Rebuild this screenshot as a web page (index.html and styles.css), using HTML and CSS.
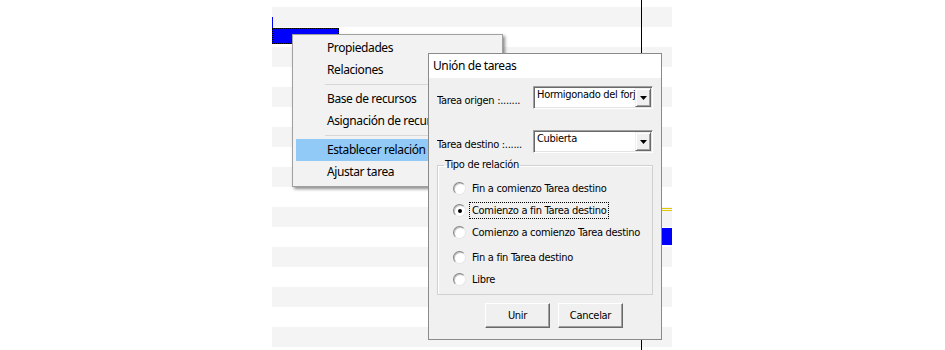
FILE: index.html
```html
<!DOCTYPE html>
<html lang="es">
<head>
  <meta charset="UTF-8">
  <title>Unión de tareas</title>
  <link rel="stylesheet" href="styles.css">
</head>
<body>
  <div class="chart">
    <div class="today-line"></div>
    <div class="task-tick"></div>
    <div class="task-bar"></div>
    <div class="link-line"></div>
    <div class="link-vline"></div>
    <div class="task-bar task-bar-right"></div>

    <div class="menu">
      <div class="menu-item">Propiedades</div>
      <div class="menu-item">Relaciones</div>
      <div class="menu-sep"></div>
      <div class="menu-item">Base de recursos</div>
      <div class="menu-item">Asignación de recursos</div>
      <div class="menu-sep"></div>
      <div class="menu-item active">Establecer relación</div>
      <div class="menu-item">Ajustar tarea</div>
    </div>

    <div class="dialog">
      <div class="dialog-title">Unión de tareas</div>
      <div class="dialog-body">
        <div class="field">
          <span class="field-label">Tarea origen :.......</span>
          <div class="combo">
            <span class="combo-text">Hormigonado del forj</span>
            <span class="combo-btn"><svg width="7" height="4" viewBox="0 0 7 4"><path d="M0 0h7L3.5 4z" fill="#000"/></svg></span>
          </div>
        </div>
        <div class="field field-second">
          <span class="field-label">Tarea destino :......</span>
          <div class="combo">
            <span class="combo-text">Cubierta</span>
            <span class="combo-btn"><svg width="7" height="4" viewBox="0 0 7 4"><path d="M0 0h7L3.5 4z" fill="#000"/></svg></span>
          </div>
        </div>

        <fieldset class="group">
          <legend>Tipo de relación</legend>
          <div class="radios">
            <div class="radio"><span class="radio-dot"></span><span class="radio-text">Fin a comienzo Tarea destino</span></div>
            <div class="radio"><span class="radio-dot checked"></span><span class="radio-text focused">Comienzo a fin Tarea destino</span></div>
            <div class="radio"><span class="radio-dot"></span><span class="radio-text">Comienzo a comienzo Tarea destino</span></div>
            <div class="radio radio-spaced"><span class="radio-dot"></span><span class="radio-text">Fin a fin Tarea destino</span></div>
            <div class="radio"><span class="radio-dot"></span><span class="radio-text">Libre</span></div>
          </div>
        </fieldset>

        <div class="buttons">
          <button class="btn">Unir</button>
          <button class="btn">Cancelar</button>
        </div>
      </div>
    </div>
  </div>
</body>
</html>
```

FILE: styles.css
```css
body {
  margin: 0;
  background: #fff;
  font-family: 'Liberation Sans', Arial, sans-serif;
}

/* gantt canvas */
.chart {
  position: relative;
  margin-left: 272px;
  width: 400px;
  height: 350px;
  overflow: hidden;
  background: repeating-linear-gradient(#f4f4f4 0 20px, #fff 20px 40px);
  background-position: 0 7px;
}

.today-line {
  position: absolute;
  left: 369px;
  top: 0;
  width: 1px;
  height: 350px;
  background: #000;
}

.task-tick {
  position: absolute;
  left: 0;
  top: 17px;
  width: 1px;
  height: 11px;
  background: #0000ff;
}

.task-bar {
  position: absolute;
  left: 0;
  top: 28px;
  width: 67px;
  height: 16px;
  background: #0000ff;
  outline: 1px dotted #000;
  outline-offset: -1px;
}

.task-bar-right {
  left: 388px;
  top: 228px;
  width: 12px;
  height: 17px;
  outline: none;
}

.link-line {
  position: absolute;
  left: 388px;
  top: 208px;
  width: 12px;
  height: 1px;
  border-top: 1px solid #e2c800;
  border-bottom: 1px solid #e2c800;
}

.link-vline {
  position: absolute;
  left: 389px;
  top: 77px;
  width: 1px;
  height: 223px;
  background: #1c1c78;
}

/* context menu */
.menu {
  position: absolute;
  left: 20px;
  top: 34px;
  width: 209px;
  padding: 2px 0 3px;
  background: #f2f2f2;
  border: 1px solid #a0a0a0;
  box-shadow: 2px 2px 3px rgba(0,0,0,0.45);
  font-family: 'Noto Sans', sans-serif;
  font-size: 12px;
  letter-spacing: -0.4px;
  color: #000;
}

.menu-item {
  margin: 0 3px;
  height: 22px;
  line-height: 22px;
  padding-left: 31px;
  white-space: nowrap;
  overflow: hidden;
}

.menu-item.active {
  background: #91c9f7;
}

.menu-sep {
  height: 1px;
  background: #d7d7d7;
  margin: 3px 3px 3px 32px;
}

.menu-sep + .menu-item {
  margin-top: 1px;
}

/* dialog */
.dialog {
  position: absolute;
  left: 156px;
  top: 53px;
  width: 232px;
  border: 1px solid #8a8a8a;
  background: #f0f0f0;
  font-family: 'DejaVu Sans Condensed', 'Liberation Sans', sans-serif;
  font-size: 11px;
  letter-spacing: -0.3px;
  color: #000;
}

.dialog-title {
  height: 24px;
  line-height: 24px;
  padding-left: 4px;
  background: #fff;
  font-family: 'Noto Sans', sans-serif;
  font-size: 12px;
  letter-spacing: -0.4px;
}

.dialog-body {
  padding: 8px 8px 11px;
}

.field {
  display: flex;
  align-items: flex-start;
}

.field-second {
  margin-top: 21px;
}

.field-label {
  flex: none;
  width: 96px;
  margin-top: 8px;
  line-height: 14px;
  white-space: nowrap;
  overflow: hidden;
}

.combo {
  flex: 1;
  min-width: 0;
  display: flex;
  height: 19px;
  background: #fff;
  border: 1px solid;
  border-color: #a0a0a0 #fff #fff #a0a0a0;
  box-shadow: inset 1px 1px #696969, inset -1px -1px #e3e3e3;
  padding: 1px;
}

.combo-text {
  flex: 1;
  min-width: 0;
  padding-left: 2px;
  line-height: 14px;
  white-space: nowrap;
  overflow: hidden;
}

.combo-btn {
  flex: none;
  width: 14px;
  display: flex;
  align-items: center;
  justify-content: center;
  background: #f0f0f0;
  border: 1px solid;
  border-color: #f0f0f0 #696969 #696969 #f0f0f0;
  box-shadow: inset 1px 1px #fff, inset -1px -1px #a0a0a0;
}

.group {
  margin: 5px 0 0;
  padding: 8px 5px 6px 6px;
  border: 1px solid #d0d0d0;
  box-shadow: inset 1px 1px #fff;
}

.group legend {
  padding: 0 1px;
  line-height: 14px;
}

.radios {
  display: flex;
  flex-direction: column;
  gap: 5px;
  padding-left: 9px;
}

.radio {
  display: flex;
  align-items: center;
  height: 17px;
}

.radio-spaced {
  margin-top: 3px;
}

.radio-dot {
  position: relative;
  width: 11px;
  height: 11px;
  margin-right: 3px;
  border-radius: 50%;
  background: #fff;
  border: 1px solid;
  border-color: #858585 #e6e6e6 #e6e6e6 #858585;
  box-shadow: inset 1px 1px #c4c4c4;
}

.radio-dot.checked::after {
  content: "";
  position: absolute;
  left: 4px;
  top: 4px;
  width: 4px;
  height: 4px;
  border-radius: 50%;
  background: #000;
}

.radio-text {
  padding: 0 2px;
  line-height: 15px;
  border: 1px dotted transparent;
  white-space: nowrap;
}

.radio-text.focused {
  border-color: #000;
}

.buttons {
  display: flex;
  gap: 8px;
  margin-top: 8px;
  padding-left: 48px;
}

.btn {
  width: 65px;
  height: 25px;
  padding: 0;
  font-family: 'DejaVu Sans Condensed', 'Liberation Sans', sans-serif;
  font-size: 11px;
  letter-spacing: -0.3px;
  color: #000;
  background: #f0f0f0;
  border: 1px solid;
  border-color: #fff #696969 #696969 #fff;
  box-shadow: inset -1px -1px #a0a0a0;
}
```
